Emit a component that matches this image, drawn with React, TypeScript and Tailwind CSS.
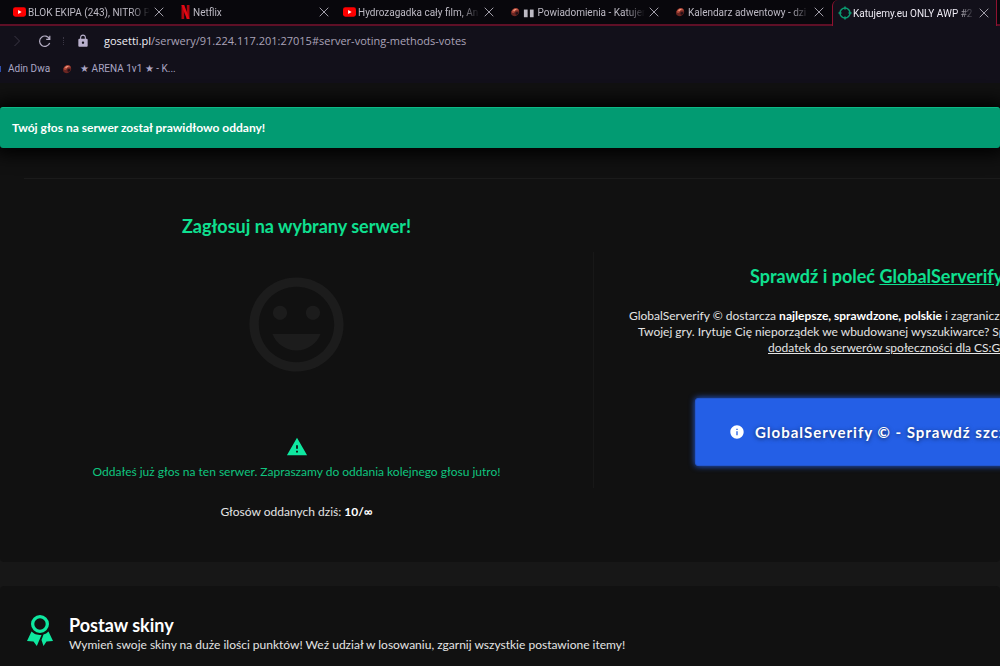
import { MdInfo, MdLock, MdMood, MdWarning } from "react-icons/md";
import type { ReactNode } from "react";

function YoutubeIcon() {
  return (
    <svg viewBox="0 0 14 10" className="h-[10px] w-[13px]">
      <rect width="14" height="10" rx="2.5" fill="#f00" />
      <path d="M5.5 2.8v4.4L9.3 5z" fill="#fff" />
    </svg>
  );
}

function NetflixIcon() {
  return (
    <svg viewBox="0 0 9 14" className="mx-auto h-[14px] w-[9px]">
      <path d="M.5 0h2.7v14H.5zM5.8 0h2.7v14H5.8z" fill="#b1060f" />
      <path d="M.5 0h2.7l5.3 14H5.8z" fill="#e50914" />
    </svg>
  );
}

function ArenaIcon() {
  return (
    <svg viewBox="0 0 10 10" className="mx-auto h-[10px] w-[10px]">
      <path d="M1 6C1 3 4 .8 6.500 1 9 1.500 9.500 4 9 6 8 8.500 5.500 9.500 3.500 9 2 8.500 1 7.500 1 6z" fill="#6b2622" />
      <path d="M1.500 5C2 2.500 4 1 6.200 1.300c1.500.2 2.500 1.200 2.500 2.500C7 3 5.500 3.500 5 4.500 4.500 6 3 6.500 1.500 5z" fill="#b34a3c" />
      <path d="M3 3.500C4 2 6 1.500 7.500 2.500 6 2.500 5 3 4.300 4.300z" fill="#f29c80" />
      <path d="M5.500 5.500c1-.8 2-.8 3 0 0 1.500-1.500 2.500-3 2z" fill="#241018" />
    </svg>
  );
}

function CrosshairIcon() {
  return (
    <svg viewBox="0 0 14 14" className="h-[14px] w-[14px]" fill="none" stroke="#0b9c72">
      <circle cx="7" cy="7" r="5" strokeWidth="1.500" />
      <path d="M7 .5v3M7 10.500v3M.5 7h3M10.500 7h3" strokeWidth="1.500" />
    </svg>
  );
}

function AwardIcon() {
  return (
    <svg viewBox="0 0 26 32" className="h-8 w-[26px] shrink-0" fill="#0fe8a0">
      <path fillRule="evenodd" d="M13 0a9 9 0 1 1 0 18 9 9 0 0 1 0-18zm0 3.300a5.700 5.700 0 1 0 0 11.400 5.700 5.700 0 0 0 0-11.400z" />
      <path d="M4.500 16.500c2.500 2.500 5 3.500 10 3.500L9.800 31 6.500 26.500 0 26z" />
      <path d="M21.500 16.500c-1.500 1.500-3 2.500-5 3L14.500 25l2 6 3-4.500 6.500-.5z" />
    </svg>
  );
}

function CloseIcon() {
  return (
    <svg viewBox="0 0 10 10" className="h-[10px] w-[10px]" fill="none" stroke="currentColor">
      <path d="M.7.7l8.600 8.600M9.300.7L.7 9.300" />
    </svg>
  );
}

type TabItem = { title: string; icon: ReactNode; active?: boolean };

const tabs: TabItem[] = [
  { title: "BLOK EKIPA (243), NITRO P", icon: <YoutubeIcon /> },
  { title: "Netflix", icon: <NetflixIcon /> },
  { title: "Hydrozagadka cały film, An", icon: <YoutubeIcon /> },
  { title: "▮▮ Powiadomienia - Katujem", icon: <ArenaIcon /> },
  { title: "Kalendarz adwentowy - dzi", icon: <ArenaIcon /> },
  { title: "Katujemy.eu ONLY AWP #2", icon: <CrosshairIcon />, active: true },
];

function Tab({ title, icon, active }: TabItem) {
  return (
    <div
      className={
        active
          ? "flex h-[26px] w-[165px] shrink-0 items-center rounded-tl-md border-x border-[#8f1230] bg-[#12101a] pl-[5px] text-[#ece9f2]"
          : "flex h-[26px] w-[165px] shrink-0 items-center border-b-2 border-[#5e0f26] pl-[6px] text-[#bdbac4]"
      }
    >
      <span className="w-[14px] shrink-0">{icon}</span>
      <span className="ml-px w-[122px] overflow-hidden whitespace-nowrap [mask-image:linear-gradient(to_right,black_84%,transparent)]">
        {title}
      </span>
      <button type="button" aria-label="Zamknij kartę" className="ml-1 text-[#a09da8]">
        <CloseIcon />
      </button>
    </div>
  );
}

function BrowserBar() {
  return (
    <header className="bg-[#12101a] font-['Roboto','Noto_Sans',sans-serif]">
      <div className="flex overflow-hidden bg-[#08070c] text-[10px]">
        <div className="h-[26px] w-[7px] shrink-0 border-b-2 border-[#5e0f26]" />
        {tabs.map((tab) => (
          <Tab key={tab.title} {...tab} />
        ))}
        <div className="h-[26px] grow border-b-2 border-[#5e0f26]" />
      </div>

      <div className="flex h-[30px] items-center text-[#aaa3b8]">
        <button type="button" aria-label="Dalej" className="ml-[13px] text-[#3a3644]">
          <svg viewBox="0 0 8 12" className="h-3 w-2" fill="none" stroke="currentColor">
            <path d="M1.500 1l5 5-5 5" />
          </svg>
        </button>
        <button type="button" aria-label="Odśwież" className="ml-[17px] text-[#b5aec4]">
          <svg viewBox="0 0 13 13" className="h-[13px] w-[13px]" fill="none" stroke="currentColor" strokeWidth="1.200">
            <path d="M11.600 4.200A5.200 5.200 0 1 0 11.700 8M11.800.8v3.600H8.200" />
          </svg>
        </button>
        <div className="ml-3 h-2 border-l border-dotted border-[#3a3644]" />
        <MdLock className="ml-3 size-[14px] text-[#b9b0cc]" />
        <p className="ml-[14px] whitespace-nowrap font-['Open_Sans','Noto_Sans',sans-serif] text-[11px]">
          <span className="text-[#f0eef5]">gosetti.pl</span>
          /serwery/91.224.117.201:27015#server-voting-methods-votes
        </p>
      </div>

      <nav className="flex h-[27px] items-center pb-[2px] text-[10px] text-[#aaa6c4]">
        <span className="h-[6px] w-px bg-[#2f4fae]" />
        <a href="#adin" className="ml-[7px]">Adin Dwa</a>
        <a href="#arena" className="ml-3 flex items-center">
          <ArenaIcon />
          <span className="ml-2">★ ARENA 1v1 ★ - K...</span>
        </a>
      </nav>
    </header>
  );
}

function VotePanel() {
  return (
    <div className="w-[593px] shrink-0 text-center">
      <h2 className="mt-[33px] text-lg font-bold text-[#0fe090]">Zagłosuj na wybrany serwer!</h2>
      <MdMood className="mx-auto mt-7 size-[113px] text-[#1c1c1c]" />
      <MdWarning className="mx-auto mt-[55px] size-[22px] text-[#0fe8a0]" />
      <p className="mt-1 text-xs leading-5 text-[#0fc57f]">
        Oddałeś już głos na ten serwer. Zapraszamy do oddania kolejnego głosu jutro!
      </p>
      <p className="mt-5 text-xs leading-5 text-[#e4e4e4]">
        Głosów oddanych dziś: <b className="text-white">10/∞</b>
      </p>
    </div>
  );
}

function GlobalPanel() {
  return (
    <div className="mt-[73px] h-[236px] min-w-0 grow overflow-hidden whitespace-nowrap border-l border-[#181818]">
      <h2 className="mt-[10px] pl-[156px] text-lg font-bold text-[#0fe090]">
        Sprawdź i poleć <a href="#global" className="underline">GlobalServerify</a>
      </h2>
      <div className="mt-[18px] text-xs leading-4 text-[#e4e4e4]">
        <p className="pl-[35px]">
          GlobalServerify © dostarcza <b className="text-white">najlepsze, sprawdzone, polskie</b> i zagranicz
        </p>
        <p className="pl-[44px]">Twojej gry. Irytuje Cię nieporządek we wbudowanej wyszukiwarce? Sp</p>
        <p className="pl-[174px]">
          <a href="#dodatek" className="underline">dodatek do serwerów społeczności dla CS:G</a>
        </p>
      </div>
      <button
        type="button"
        className="ml-[101px] mt-[42px] flex h-[68px] w-full items-center rounded-[3px] border border-[#2456cc] bg-[#245fe6] pl-[33px] text-[15px] font-bold tracking-[1px] text-white shadow-[0_0_6px_#245fe6] [text-shadow:0_1px_4px_rgba(0,0,0,0.6)]"
      >
        <MdInfo className="mr-[10px] size-4 shrink-0" />
        GlobalServerify © - Sprawdź szcz
      </button>
    </div>
  );
}

export default function App() {
  return (
    <div className="min-h-screen overflow-hidden bg-[#171717]">
      <BrowserBar />

      <main className="font-['Lato','Noto_Sans',sans-serif]">
        <section className="rounded-b bg-[#111] pb-10">
          <div className="h-6 bg-[#111]" />
          <div
            role="alert"
            className="relative flex h-[41px] items-center rounded-[3px] border-t border-[#0cb886] bg-[#029b72] pl-3 text-xs font-bold text-white shadow-[0_0_18px_6px_#000]"
          >
            Twój głos na serwer został prawidłowo oddany!
          </div>
          <hr className="ml-6 mt-[30px] border-[#1b1b1b]" />
          <div className="flex">
            <VotePanel />
            <GlobalPanel />
          </div>
        </section>

        <section className="mt-6 flex h-[81px] items-start rounded-t bg-[#111] pl-[27px] pt-[29px]">
          <AwardIcon />
          <div className="ml-4">
            <h3 className="text-lg leading-5 font-bold text-white">Postaw skiny</h3>
            <p className="text-xs leading-5 text-[#e4e4e4]">
              Wymień swoje skiny na duże ilości punktów! Weź udział w losowaniu, zgarnij wszystkie postawione itemy!
            </p>
          </div>
        </section>
      </main>
    </div>
  );
}
